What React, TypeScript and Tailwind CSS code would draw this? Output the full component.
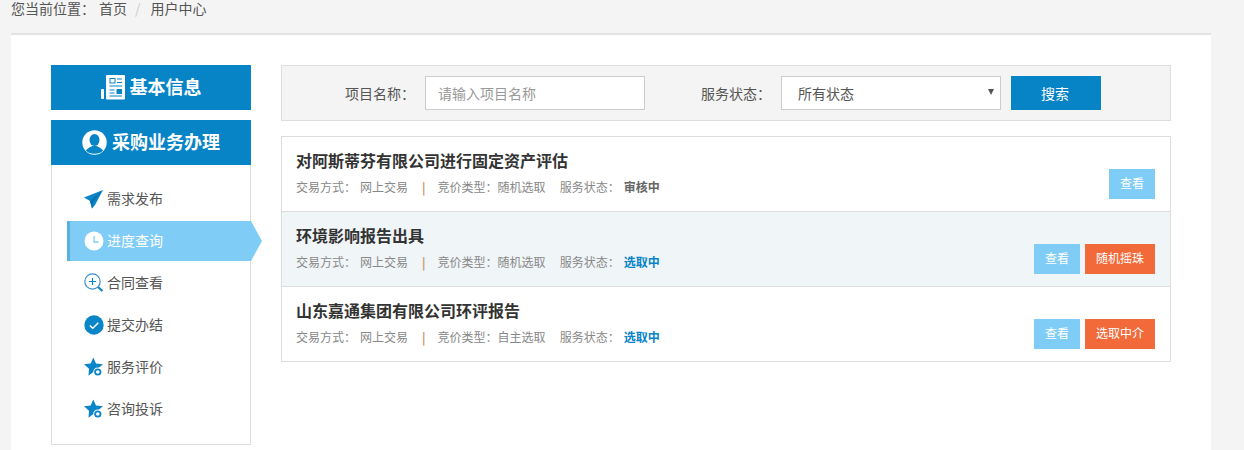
import React from "react";

const font = { fontFamily: '"Noto Sans CJK SC", "Liberation Sans", sans-serif' };

function Send() {
  return (
    <svg width="20" height="19" viewBox="0 0 20 19"><path d="M19 0 L0 7.5 L6 11 L8 18.500 L11 15 Z" fill="#0a85c7" /><path d="M19 0 L6 11 L8 18.500 L9 12 Z" fill="#0670ab" /></svg>
  );
}
function Clock() {
  return (
    <svg width="20" height="20" viewBox="0 0 20 20"><circle cx="10" cy="10" r="9.500" fill="#fff" /><path d="M10 5v6h4.500" stroke="#7fcdf7" strokeWidth="1.300" fill="none" /></svg>
  );
}
function Zoom() {
  return (
    <svg width="20" height="20" viewBox="0 0 20 20" fill="none"><circle cx="8.500" cy="8.500" r="7.700" stroke="#3b8fca" strokeWidth="1.200" /><path d="M8.500 5v7M5 8.500h7" stroke="#0a85c7" strokeWidth="1.200" /><path d="M14 14l4.500 4" stroke="#0a85c7" strokeWidth="2.200" /></svg>
  );
}
function Check() {
  return (
    <svg width="20" height="20" viewBox="0 0 20 20" fill="none"><circle cx="10" cy="10" r="9.700" fill="#0a85c7" /><path d="M5.800 10.500l3 2.700 5.500-5.400" stroke="#fff" strokeWidth="1.500" /></svg>
  );
}
function StarGear() {
  return (
    <svg width="20" height="20" viewBox="0 0 20 20"><path d="M9.300 0.500 L12 6.600 L19 7.200 L13.800 11.600 L15.500 18 L9.300 15 L4.500 18.800 L5 11.800 L0 7.200 L6.700 6.600 Z" fill="#0a85c7" /><circle cx="13.800" cy="15" r="4.600" fill="#fff" /><circle cx="13.800" cy="15" r="2.700" fill="none" stroke="#0a85c7" strokeWidth="1.800" /></svg>
  );
}
function Paper() {
  return (
    <svg width="25" height="25" viewBox="0 0 25 25">
      <rect x="0" y="14" width="3" height="10" rx="1" fill="#fff" />
      <rect x="5" y="0" width="19" height="24.500" rx="1" fill="#fff" />
      <rect x="9" y="3.500" width="5" height="4.500" fill="none" stroke="#0784c6" strokeWidth="1" />
      <path d="M16 4h5M16 7.500h5M8.500 11h12.500M8.500 15h5M8.500 18h5M8.500 21h12.500" stroke="#0784c6" strokeWidth="1" />
      <rect x="15.500" y="14" width="5.500" height="5" fill="#0784c6" />
    </svg>
  );
}
function User() {
  return (
    <svg width="25" height="25" viewBox="0 0 25 25"><circle cx="12.500" cy="12.500" r="12.200" fill="#fff" /><ellipse cx="12.500" cy="10" rx="5" ry="6" fill="#0784c6" /><path d="M3.800 20.500C5.500 18 8.500 17 10.500 16h4c2 1 5 2 6.700 4.500-2 2.200-5 3.300-8.700 3.300s-6.700-1.100-8.700-3.300Z" fill="#0784c6" /></svg>
  );
}

const menu = [
  { label: "需求发布", icon: <Send /> },
  { label: "进度查询", icon: <Clock />, active: true },
  { label: "合同查看", icon: <Zoom /> },
  { label: "提交办结", icon: <Check /> },
  { label: "服务评价", icon: <StarGear /> },
  { label: "咨询投诉", icon: <StarGear /> },
];

const rows = [
  { title: "对阿斯蒂芬有限公司进行固定资产评估", mode: "随机选取", status: "审核中", statusCls: "text-[#666]", action: null as string | null, bg: "bg-white" },
  { title: "环境影响报告出具", mode: "随机选取", status: "选取中", statusCls: "text-[#0784c6]", action: "随机摇珠", bg: "bg-[#f0f5f8]" },
  { title: "山东嘉通集团有限公司环评报告", mode: "自主选取", status: "选取中", statusCls: "text-[#0784c6]", action: "选取中介", bg: "bg-white" },
];

export default function App() {
  return (
    <div className="h-[450px] overflow-hidden bg-[#f4f4f4] text-[#555]" style={font}>
      <div className="flex h-[33px] items-start pl-[11px] text-[14px] leading-[16px] text-[#555]">
        <span>您当前位置：</span>
        <span className="ml-[4px]">首页</span>
        <span className="ml-[8px] mr-[10px] text-[#ccc]">/</span>
        <span>用户中心</span>
      </div>
      <div className="mx-[11px] flex h-[417px] w-[1200px] gap-[30px] border-t-2 border-[#e3e3e3] bg-white pl-[40px] pt-[30px]">
        <aside className="w-[200px] shrink-0">
          <div className="flex h-[45px] items-center justify-center gap-[4px] bg-[#0784c6] text-[18px] font-bold text-white">
            <Paper />
            <span className="mb-[3px]">基本信息</span>
          </div>
          <div className="mt-[10px] flex h-[45px] items-center justify-center gap-[5px] bg-[#0784c6] text-[18px] font-bold text-white">
            <User />
            <span className="mb-[2px]">采购业务办理</span>
          </div>
          <ul className="flex h-[280px] flex-col gap-[2px] border border-t-0 border-[#ddd] pt-[14px]">
            {menu.map((m) => (
              <li
                key={m.label}
                className={
                  m.active
                    ? "relative ml-[15px] flex h-[40px] w-[184px] items-center border-l-[3px] border-[#5ab0de] bg-[#7fcdf7] pl-[14px] text-[14px] text-white"
                    : "ml-[15px] flex h-[40px] items-center pl-[17px] text-[14px] text-[#555]"
                }
              >
                <span className="mr-[3px] flex w-[20px] justify-center">{m.icon}</span>
                <span className="mb-[2px]">{m.label}</span>
                {m.active && (
                  <span className="absolute left-full top-0 h-0 w-0 border-y-[20px] border-l-[11px] border-y-transparent border-l-[#7fcdf7]" />
                )}
              </li>
            ))}
          </ul>
        </aside>
        <main className="w-[890px] shrink-0">
          <div className="flex h-[56px] items-center border border-[#ddd] bg-[#f4f4f4] pl-[63px] text-[14px] text-[#555]">
            <span className="w-[80px]">项目名称：</span>
            <input
              readOnly
              placeholder="请输入项目名称"
              className="h-[34px] w-[220px] border border-[#ccc] bg-white px-[12px] text-[14px] outline-none placeholder:text-[#999]"
            />
            <span className="ml-[56px] w-[80px]">服务状态：</span>
            <div className="relative flex h-[34px] w-[220px] items-center border border-[#ccc] bg-white pl-[16px] text-[14px] text-[#555]">
              所有状态
              <span className="absolute right-[6px] top-[12px] h-0 w-0 border-x-[3px] border-t-[6px] border-x-transparent border-t-[#555]" />
            </div>
            <button className="ml-[10px] h-[34px] w-[90px] bg-[#0784c6] pr-[2px] text-[14px] text-white">搜索</button>
          </div>
          <div className="mt-[15px] border border-[#ddd]">
            {rows.map((r, i) => (
              <div
                key={r.title}
                className={`relative pl-[14px] ${r.bg} ${i > 0 ? "h-[75px] border-t border-[#ddd]" : "h-[74px]"}`}
              >
                <h3 className="h-[35px] pt-[12px] text-[16px] font-bold leading-[22px] text-[#333]">{r.title}</h3>
                <p className="mt-[7px] flex text-[12px] leading-[16px] text-[#888]">
                  <span>交易方式：</span>
                  <span className="ml-[4px]">网上交易</span>
                  <span className="ml-[14px] font-bold text-[#c9965f]">|</span>
                  <span className="ml-[12px]">竞价类型：{r.mode}</span>
                  <span className="ml-[14px]">服务状态：</span>
                  <span className={`ml-[4px] font-bold ${r.statusCls}`}>{r.status}</span>
                </p>
                <div className="absolute bottom-[12px] right-[15px] flex gap-[5px]">
                  <button className="h-[30px] w-[46px] bg-[#7fcdf7] pb-[2px] text-[12px] text-white">查看</button>
                  {r.action && (
                    <button className="h-[30px] w-[70px] bg-[#f2693a] pb-[2px] text-[12px] text-white">{r.action}</button>
                  )}
                </div>
              </div>
            ))}
          </div>
        </main>
      </div>
    </div>
  );
}
